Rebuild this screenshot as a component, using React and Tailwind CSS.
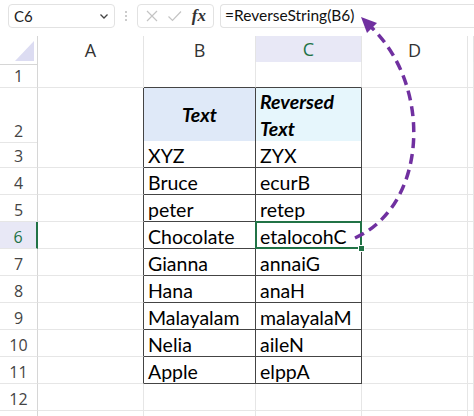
import React from 'react';

const data = [
    ['XYZ', 'ZYX'],
    ['Bruce', 'ecurB'],
    ['peter', 'retep'],
    ['Chocolate', 'etalocohC'],
    ['Gianna', 'annaiG'],
    ['Hana', 'anaH'],
    ['Malayalam', 'malayalaM'],
    ['Nelia', 'aileN'],
    ['Apple', 'elppA'],
];

const cols = ['A', 'B', 'C', 'D', ''];

const rowHeights = ['h-[26px]', 'h-[53px]'];

const font = { fontFamily: 'Lato, "Liberation Sans", sans-serif' };

const Cell = ({ row, col }) => {
    // col 1..5 => A..E
    const inTable = row >= 2 && row <= 11;
    const darkRight = inTable && col >= 1 && col <= 3;
    const darkBottom = row >= 1 && row <= 11 && (col === 2 || col === 3);
    const selected = row === 6 && col === 3;

    let bg = 'bg-white';
    if (row === 2 && col === 2) bg = 'bg-[#dfe9f8]';
    if (row === 2 && col === 3) bg = 'bg-[#e6f6fc]';

    let content = null;
    if (row === 2 && col === 2) {
        content = (
            <div className="h-full flex items-center justify-center font-bold italic text-[19.5px] text-black">Text</div>
        );
    } else if (row === 2 && col === 3) {
        content = (
            <div className="h-full flex flex-col justify-center pl-[4px] font-bold italic text-[19.5px] leading-[27px] text-black">
                <span>Reversed</span>
                <span>Text</span>
            </div>
        );
    } else if (row >= 3 && row <= 11 && (col === 2 || col === 3)) {
        content = (
            <div className="h-full flex items-end pl-[4px] text-[19.5px] leading-[22px] text-black">
                {data[row - 3][col - 2]}
            </div>
        );
    }

    return (
        <div
            className={`relative ${bg} border-r border-b ${darkRight ? 'border-r-[#444]' : 'border-r-[#e6e6e6]'} ${darkBottom ? 'border-b-[#444]' : 'border-b-[#e6e6e6]'}`}
        >
            {content}
            {selected && (
                <>
                    <div className="absolute z-10 -left-px -top-px -right-px -bottom-px border-2 border-[#217346]"></div>
                    <div className="absolute z-10 -right-[4px] -bottom-[4px] w-[7px] h-[7px] bg-[#217346] border border-white"></div>
                </>
            )}
        </div>
    );
};

const App = () => {
    const rows = Array.from({ length: 13 }, (_, i) => i + 1);

    return (
        <div className="relative w-[474px] h-[416px] overflow-hidden bg-white" style={font}>
            {/* formula bar */}
            <div className="h-[36px] flex items-start pt-[4px] pl-[8px] gap-[6px]">
                <div className="w-[107px] h-[24px] border border-[#e2e2e2] rounded-[4px] flex items-center justify-between pl-[5px] pr-[4px] text-[15px] text-[#222]">
                    <span>C6</span>
                    <svg width="12" height="12" viewBox="0 0 12 12" fill="none" stroke="#444" strokeWidth="1.3">
                        <path d="M2.5 4.5 L6 8 L9.5 4.5" />
                    </svg>
                </div>
                <div className="w-[10px] h-[24px] flex flex-col items-center justify-center gap-[2px]">
                    <span className="w-[2px] h-[2px] bg-[#bbb] rounded-full"></span>
                    <span className="w-[2px] h-[2px] bg-[#bbb] rounded-full"></span>
                    <span className="w-[2px] h-[2px] bg-[#bbb] rounded-full"></span>
                </div>
                <div className="w-[77px] h-[24px] border border-[#e2e2e2] rounded-[4px] flex items-center justify-between pl-[7px] pr-[5px]">
                    <svg width="14" height="14" viewBox="0 0 14 14" fill="none" stroke="#c4c4c4" strokeWidth="1.2">
                        <path d="M2 2 L12 12 M12 2 L2 12" />
                    </svg>
                    <svg width="16" height="14" viewBox="0 0 16 14" fill="none" stroke="#c4c4c4" strokeWidth="1.2">
                        <path d="M1.5 7.5 L5.5 11.5 L14 2.5" />
                    </svg>
                    <span className="italic font-bold text-[17px] text-[#333] pr-[2px]" style={{ fontFamily: '"Liberation Serif", serif' }}>fx</span>
                </div>
                <div className="flex-1 h-[24px] border border-r-0 border-[#e2e2e2] rounded-l-[4px] flex items-center pl-[4px] text-[15.5px] text-[#111]">
                    =ReverseString(B6)
                </div>
            </div>

            {/* column headers */}
            <div className="grid grid-cols-[38px_106px_112px_106px_106px_6px] h-[26px]">
                <div className="relative border-r border-b border-[#d6d6d6]">
                    <div className="absolute right-[3px] bottom-[3px] w-0 h-0 border-l-[19px] border-l-transparent border-b-[20px] border-b-[#dcdcf2]"></div>
                </div>
                {cols.map((c) => (
                    <div
                        key={c || 'e'}
                        className={`flex items-center justify-center text-[18px] border-r border-r-[#e4e4e4] ${c === 'C' ? 'bg-[#e8e8f6] border-b-2 border-b-[#217346] text-[#217346]' : 'border-b border-b-[#d6d6d6] text-[#333]'}`}
                        style={{ fontFamily: '"Open Sans", sans-serif' }}
                    >
                        {c}
                    </div>
                ))}
            </div>

            {/* rows */}
            {rows.map((r) => (
                <div key={r} className={`grid grid-cols-[38px_106px_112px_106px_106px_6px] ${rowHeights[r - 1] || 'h-[27px]'}`}>
                    <div
                        className={`flex items-end justify-center text-[16px] leading-[22px] border-b border-b-[#e6e6e6] ${r === 6 ? 'bg-[#e8e8f6] border-r-2 border-r-[#217346] text-[#217346]' : 'border-r border-r-[#d6d6d6] text-[#444]'}`}
                        style={{ fontFamily: '"Open Sans", sans-serif' }}
                    >
                        {r <= 12 ? r : ''}
                    </div>
                    {[1, 2, 3, 4, 5].map((c) => (
                        <Cell key={c} row={r} col={c} />
                    ))}
                </div>
            ))}

            {/* dashed arrow */}
            <svg className="absolute left-0 top-0 z-20 pointer-events-none" width="474" height="416" viewBox="0 0 474 416">
                <path
                    d="M355 238 C 428 205, 433 85, 370 26"
                    fill="none"
                    stroke="#7030a0"
                    strokeWidth="3.5"
                    strokeDasharray="10 6"
                />
                <polygon points="361,17 377,23 367,33" fill="#7030a0" />
            </svg>
        </div>
    );
};

export default App;
